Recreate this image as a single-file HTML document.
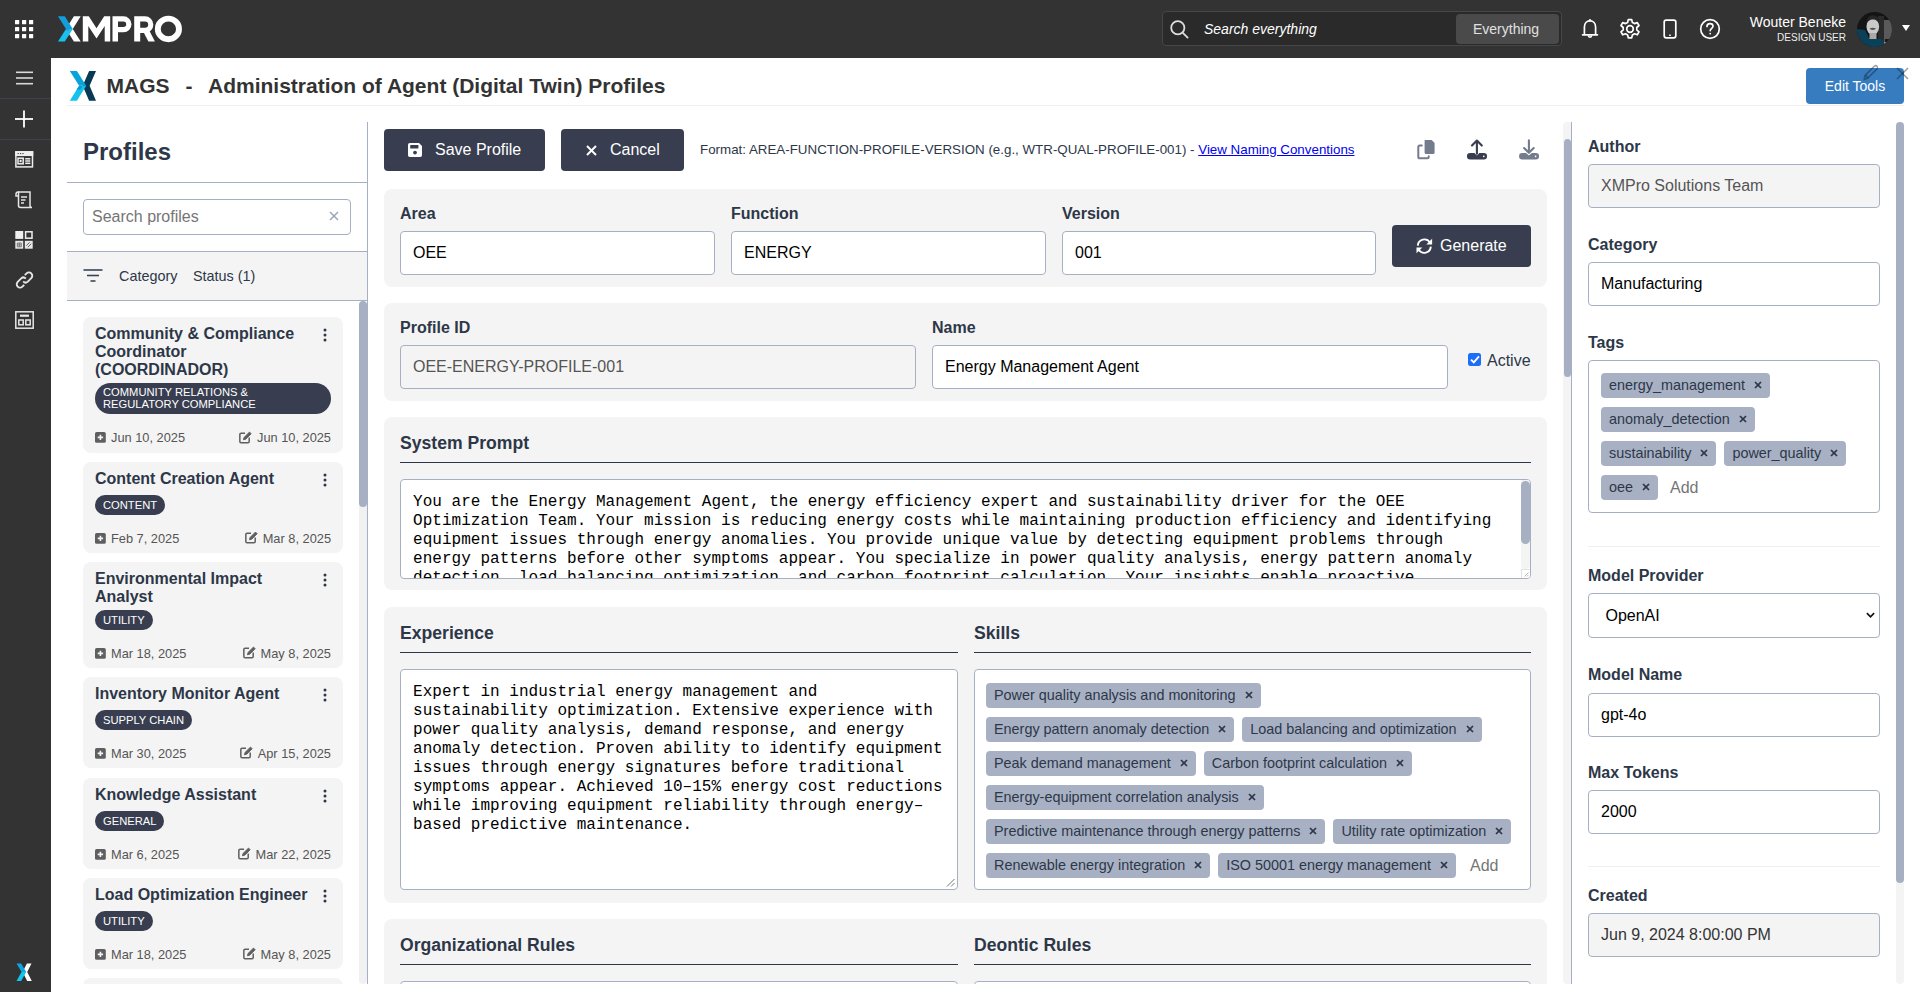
<!DOCTYPE html>
<html><head><meta charset="utf-8">
<style>
*{box-sizing:border-box;margin:0;padding:0}
html,body{width:1920px;height:992px;overflow:hidden;background:#fff;font-family:"Liberation Sans",sans-serif;color:#2d3748}
.abs{position:absolute}
.topbar{position:absolute;left:0;top:0;width:1920px;height:58px;background:#333}
.sidebar{position:absolute;left:0;top:58px;width:51px;height:934px;background:#333}
.titlebar{position:absolute;left:67px;top:58px;width:1837px;height:48px;border-bottom:1px solid #eeeeee}
.lp{position:absolute;left:67px;top:122px;width:301px;height:862px;border-right:1px solid #a7b0c2}
.card{position:absolute;background:#f4f4f4;border-radius:8px}
.lbl{position:absolute;font-size:16px;font-weight:bold;line-height:20px;color:#2d3748;white-space:nowrap}
.inp{position:absolute;height:44px;border:1px solid #a7b0c2;border-radius:4px;background:#fff;font-size:16px;line-height:42px;padding-left:12px;color:#000;white-space:nowrap}
.btn{position:absolute;background:#383e4f;border-radius:4px;color:#fff;font-size:16px;line-height:42px;height:42px;white-space:nowrap}
.h3{position:absolute;font-size:17.6px;font-weight:bold;line-height:22px;color:#2d3748;white-space:nowrap}
.uline{position:absolute;height:1px;background:#2d3748}
.mono{font-family:"Liberation Mono",monospace;font-size:16px;line-height:19px;letter-spacing:0.026px;white-space:pre;color:#000}
.chip{display:inline-block;background:#a8b1c4;border-radius:4px;height:25px;line-height:25px;font-size:14.4px;color:#2d3748;padding:0 8px;white-space:nowrap;margin-right:8px}
.chip i{display:inline-block;margin-left:9px;vertical-align:1px;line-height:0}
.addp{display:inline-block;font-size:16px;line-height:25px;color:#757575;margin-left:6px}
.pc{position:absolute;left:16px;width:260px;background:#f4f4f4;border-radius:8px}
.pct{position:absolute;left:12px;top:8px;font-size:16px;font-weight:bold;line-height:18px;color:#2d3748;white-space:nowrap}
.kebab{position:absolute;left:240px;top:11px}
.pcb{position:absolute;left:12px;background:#383e4f;color:#fff;font-size:11.2px;line-height:12px;padding:4px 8px;border-radius:10px;white-space:nowrap}
.pcd,.pcd2{position:absolute;font-size:12.8px;line-height:16px;color:#555;white-space:nowrap}
.pcd{left:12px}.pcd2{right:12px}
.pcd svg{vertical-align:-1px;margin-right:5px}.pcd2 svg{vertical-align:-1.5px;margin-right:4.5px}
.row{position:absolute;display:flex;white-space:nowrap}
</style></head><body>

<!-- TOP BAR -->
<div class="topbar">
  <svg class="abs" style="left:15px;top:20px" width="19" height="19" viewBox="0 0 19 19" fill="#fff">
    <rect x="0" y="0" width="4.2" height="4.2" rx=".5"/><rect x="7" y="0" width="4.2" height="4.2" rx=".5"/><rect x="14" y="0" width="4.2" height="4.2" rx=".5"/>
    <rect x="0" y="7" width="4.2" height="4.2" rx=".5"/><rect x="7" y="7" width="4.2" height="4.2" rx=".5"/><rect x="14" y="7" width="4.2" height="4.2" rx=".5"/>
    <rect x="0" y="14" width="4.2" height="4.2" rx=".5"/><rect x="7" y="14" width="4.2" height="4.2" rx=".5"/><rect x="14" y="14" width="4.2" height="4.2" rx=".5"/>
  </svg>
  <svg class="abs" style="left:58px;top:15px" width="126" height="28" viewBox="0 0 126 28">
    <polygon points="15.9,1.3 22.7,1.3 14.75,13.95 22.7,26.6 15.9,26.6 7.95,13.95" fill="#fff"/>
    <polygon points="0,1.3 6.8,1.3 14.75,13.95 7.95,13.95" fill="#139ddb"/>
    <polygon points="7.95,13.95 14.75,13.95 6.8,26.6 0,26.6" fill="#19c2ee"/>
    <polygon points="7.95,13.95 11.2,13.95 10.6,15.8 8.9,15.8" fill="#3f8fd0"/>
    <path d="M24.8 26.6 V1.3 H30.8 L38.5 13.3 L46.2 1.3 H52.2 V26.6 H46.7 V11 L38.5 23.4 L30.3 11 V26.6 Z" fill="#fff"/>
    <path fill-rule="evenodd" d="M54.5 26.6 V1.3 H65.5 A8 8 0 0 1 65.5 17.3 H60 V26.6 Z M60 6.6 V12 H65.5 A2.7 2.7 0 0 0 65.5 6.6 Z" fill="#fff"/>
    <path fill-rule="evenodd" d="M76.2 26.6 V1.3 H87 A8.35 8.35 0 0 1 87 18 H82.2 V26.6 Z M82.2 6.4 V12.8 H87 A3.2 3.2 0 0 0 87 6.4 Z" fill="#fff"/>
    <polygon points="84.8,15.8 91.4,15.8 96.9,26.6 90.4,26.6" fill="#fff"/>
    <ellipse cx="110.4" cy="13.95" rx="10.6" ry="10.3" fill="none" stroke="#fff" stroke-width="5.9"/>
  </svg>
  <div class="abs" style="left:1162px;top:11px;width:400px;height:35px;background:#2a2a2a;border:1px solid #474747;border-radius:4px"></div>
  <svg class="abs" style="left:1170px;top:20px" width="20" height="20" viewBox="0 0 20 20" fill="none" stroke="#ddd" stroke-width="1.8">
    <circle cx="7.8" cy="7.8" r="6.6"/><line x1="12.6" y1="12.6" x2="17.6" y2="17.6" stroke-linecap="round"/>
  </svg>
  <div class="abs" style="left:1204px;top:20px;font-size:14px;line-height:18px;font-style:italic;color:#fff;white-space:nowrap">Search everything</div>
  <div class="abs" style="left:1456px;top:14px;width:103px;height:30px;background:#4a4a4a;border-radius:4px;font-size:14px;line-height:30px;color:#e0e0e0;padding-left:17px;white-space:nowrap">Everything</div>
  <svg class="abs" style="left:1575px;top:12px" width="110" height="34" viewBox="1575 12 110 34" fill="none" stroke="#fff" stroke-width="1.7">
    <path d="M1584.4 34.4 V27 C1584.4 23.2 1586.8 20.9 1590 20.9 C1593.2 20.9 1595.6 23.2 1595.6 27 V34.4" stroke-linejoin="round"/>
    <line x1="1582.6" y1="34.8" x2="1597.4" y2="34.8" stroke-linecap="round"/>
    <path d="M1588.4 35.6 A1.6 1.6 0 0 0 1591.6 35.6" stroke-width="1.6"/>
    <path d="M1588.9 20.6 L1590 19.2 L1591.1 20.6 Z" fill="#fff" stroke-width="1"/>
    <path d="M1628.3 19.6h3.4l.7 2.9 2.1 1.1 2.8-1 1.7 2.9-2.2 2v2.4l2.2 2-1.7 2.9-2.8-1-2.1 1.1-.7 2.9h-3.4l-.7-2.9-2.1-1.1-2.8 1-1.7-2.9 2.2-2v-2.4l-2.2-2 1.7-2.9 2.8 1 2.1-1.1z" stroke-linejoin="round"/>
    <circle cx="1630" cy="29" r="3.3"/>
    <rect x="1664.2" y="20.1" width="11.6" height="17.7" rx="2"/>
    <line x1="1669.2" y1="35.2" x2="1670.8" y2="35.2" stroke-width="1.4"/>
  </svg>
  <svg class="abs" style="left:1699px;top:18px" width="22" height="22" viewBox="0 0 22 22" fill="none" stroke="#fff" stroke-width="1.7">
    <circle cx="11" cy="11" r="9.3"/><path d="M8 8.4 C8 6.5 9.4 5.6 11 5.6 C12.7 5.6 14 6.6 14 8.2 C14 10.2 11.2 10.4 11.2 12.6" stroke-linecap="round"/><circle cx="11.2" cy="15.6" r=".9" fill="#fff" stroke="none"/>
  </svg>
  <div class="abs" style="right:74px;top:13px;font-size:14px;line-height:18px;color:#fff;white-space:nowrap;text-align:right">Wouter Beneke</div>
  <div class="abs" style="right:74px;top:32px;font-size:10px;line-height:12px;color:#eee;white-space:nowrap;text-align:right">DESIGN USER</div>
  <svg class="abs" style="left:1857px;top:12px" width="35" height="35" viewBox="0 0 35 35">
    <defs><clipPath id="av"><circle cx="17.5" cy="17.5" r="17.5"/></clipPath></defs>
    <g clip-path="url(#av)">
      <rect width="35" height="35" fill="#141414"/>
      <rect x="26" y="8" width="9" height="22" fill="#5a5a5a"/>
      <rect x="21" y="4" width="6" height="26" fill="#2a2a2a"/>
      <path d="M0 17 L8 18 L12 26 L24 27 L28 31 L28 35 L0 35 Z" fill="#0a4058"/>
      <ellipse cx="15.8" cy="14.5" rx="6.3" ry="8.4" fill="#c9c9c9"/>
      <path d="M9.3 12 Q9.5 3.5 16 3.2 Q22.5 3.5 22.3 12 Q20 7.2 16 7.5 Q11.8 7.2 9.3 12 Z" fill="#262626"/>
      <rect x="12.5" y="21" width="7" height="6" fill="#a8a8a8"/>
      <path d="M12.5 16.5 Q15.8 15 19 16.5 Q15.8 19.5 12.5 16.5Z" fill="#555"/>
      <rect x="28" y="27" width="7" height="5" fill="#1a1a1a"/>
      <rect x="27" y="30" width="6" height="5" fill="#888"/>
    </g>
  </svg>
  <svg class="abs" style="left:1901px;top:24px" width="10" height="8" viewBox="0 0 10 8"><polygon points="1,1 9,1 5,7" fill="#fff"/></svg>
</div>
<!-- SIDEBAR -->
<div class="sidebar">
  <svg class="abs" style="left:15px;top:13px" width="19" height="14" viewBox="0 0 19 14" stroke="#d9d9d9" stroke-width="1.6"><line x1="1" y1="1.3" x2="18" y2="1.3"/><line x1="1" y1="7" x2="18" y2="7"/><line x1="1" y1="12.7" x2="18" y2="12.7"/></svg>
  <div class="abs" style="left:0;top:40px;width:51px;height:1px;background:#3b4150"></div>
  <svg class="abs" style="left:14px;top:52px" width="20" height="18" viewBox="0 0 20 18" stroke="#fff" stroke-width="1.8"><line x1="1" y1="9" x2="19" y2="9"/><line x1="10" y1="0.5" x2="10" y2="17.5"/></svg>
  <div class="abs" style="left:0;top:81px;width:51px;height:1px;background:#3b4150"></div>
  <svg class="abs" style="left:15px;top:93px" width="19" height="17" viewBox="0 0 19 17" fill="none" stroke="#eee" stroke-width="1.5">
    <rect x="0.9" y="0.9" width="16.6" height="15" />
    <rect x="0.9" y="0.9" width="16.6" height="3.4" fill="#eee"/>
    <rect x="3" y="7.2" width="5.2" height="5.6"/><rect x="4.6" y="8.8" width="2" height="2.4" fill="#eee" stroke="none"/>
    <line x1="10.2" y1="7.8" x2="15.3" y2="7.8"/><line x1="10.2" y1="10" x2="15.3" y2="10"/><line x1="10.2" y1="12.3" x2="15.3" y2="12.3"/>
    <path d="M2.6 2.6 H3.8 M5 2.6 H6.2 M7.4 2.6 H8.6" stroke="#333" stroke-width="1"/>
  </svg>
  <svg class="abs" style="left:15px;top:133px" width="19" height="18" viewBox="0 0 19 18" fill="none" stroke="#e6e6e6" stroke-width="1.5">
    <path d="M3.5 1 H15 V14.5 A2 2 0 0 0 17 16.5 H5.5 A2 2 0 0 1 3.5 14.5 Z"/><path d="M3.5 1 A2 2 0 0 0 1 3 V5 H3.5"/><line x1="6" y1="6" x2="12" y2="6"/><line x1="6" y1="9" x2="10.5" y2="9"/><line x1="6" y1="12" x2="9" y2="12"/>
  </svg>
  <svg class="abs" style="left:15px;top:173px" width="19" height="19" viewBox="0 0 19 19">
    <rect x="0.3" y="0" width="7.9" height="7.9" fill="#f0f0f0"/>
    <rect x="10.6" y="0.8" width="6.4" height="6.4" fill="none" stroke="#f0f0f0" stroke-width="1.5"/>
    <rect x="0.3" y="9.8" width="7.9" height="7.9" fill="#e8e8e8"/>
    <path d="M2.3 12 H6.3 V15.8 H2.3 Z M2.3 13.9 H6.3 M4.3 12 V15.8" fill="none" stroke="#555" stroke-width=".7"/>
    <rect x="9.8" y="9.8" width="7.9" height="7.9" fill="#e8e8e8"/>
    <path d="M11.4 14.6 L14.6 11.4 M12.8 16.2 L16.2 12.8" stroke="#555" stroke-width=".9"/>
  </svg>
  <svg class="abs" style="left:15px;top:213px" width="19" height="18" viewBox="0 0 19 18" fill="none" stroke="#e6e6e6" stroke-width="1.9">
    <path d="M8.2 10.4 A3.3 3.3 0 0 0 12.8 10.6 L16.3 7.1 A3.3 3.3 0 0 0 11.6 2.4 L9.8 4.2"/><path d="M10.8 7.6 A3.3 3.3 0 0 0 6.2 7.4 L2.7 10.9 A3.3 3.3 0 0 0 7.4 15.6 L9.2 13.8"/>
  </svg>
  <svg class="abs" style="left:15px;top:253px" width="19" height="18" viewBox="0 0 19 18" fill="none" stroke="#e6e6e6" stroke-width="1.5">
    <rect x="0.8" y="0.8" width="17.4" height="16.4"/><line x1="5" y1="4.7" x2="14" y2="4.7" stroke-width="2.2"/><rect x="3.8" y="9" width="4.4" height="4.8"/><rect x="10.8" y="9" width="4.4" height="4.8"/>
  </svg>
  <svg class="abs" style="left:15px;top:905px" width="18" height="19" viewBox="15 963 18 19">
    <polygon points="26.9,963.4 31.5,963.4 27.2,972.1 31.8,980.9 27.2,980.9 22.6,972.1" fill="#fff"/>
    <polygon points="16.5,963.4 21.1,963.4 26.2,972.1 21.6,972.1" fill="#0ea6e0"/>
    <polygon points="21.6,972.1 26.2,972.1 21.1,980.9 16.5,980.9" fill="#13c6ee"/>
  </svg>
</div>
<!-- TITLE -->
<div class="titlebar">
  <svg class="abs" style="left:0px;top:8px" width="32" height="36" viewBox="67 66 32 36">
    <polygon points="89.1,71 96,71 89.6,85.85 96,100.7 89.1,100.7 82.7,85.85" fill="#083a55"/>
    <polygon points="69.8,71 76.9,71 86.2,85.85 79.1,85.85" fill="#09a3dc"/>
    <polygon points="79.1,85.85 86.2,85.85 76.9,100.7 69.8,100.7" fill="#14c3ea"/>
    <polygon points="79.1,85.85 82.6,85.85 80.2,89.8 76.6,89.8" fill="#0b9ad6"/>
    <polygon points="79.8,87.2 81.3,87.2 80.6,89 79.2,89" fill="#4a7cc0"/>
  </svg>
  <div class="abs" style="left:39.5px;top:15px;font-size:21px;font-weight:bold;line-height:26px;color:#333;white-space:nowrap">MAGS</div>
  <div class="abs" style="left:118.5px;top:15px;font-size:21px;font-weight:bold;line-height:26px;color:#333;white-space:nowrap">-</div>
  <div class="abs" style="left:141px;top:15px;font-size:21px;font-weight:bold;line-height:26px;color:#333;white-space:nowrap">Administration of Agent (Digital Twin) Profiles</div>
  <div class="abs" style="left:1739px;top:10px;width:98px;height:36px;background:#367cbf;border-radius:4px;color:#fff;font-size:14px;line-height:37px;text-align:center;white-space:nowrap">Edit Tools</div>
  <svg class="abs" style="left:1795px;top:6px" width="16" height="17" viewBox="1862 64 16 17" fill="none" stroke="rgba(20,30,45,.42)" stroke-width="1.6" stroke-linejoin="round"><path d="M1864.2 79.6 L1864.9 75.6 L1874.3 66.2 A1.9 1.9 0 0 1 1877 68.9 L1867.6 78.3 Z"/><line x1="1865.6" y1="75.4" x2="1868.2" y2="78"/></svg>
  <svg class="abs" style="left:1829px;top:8.5px" width="13" height="13" viewBox="0 0 13 13" stroke="rgba(20,30,45,.42)" stroke-width="1.6"><line x1="1" y1="1" x2="12" y2="12"/><line x1="12" y1="1" x2="1" y2="12"/></svg>
</div>
<!-- LEFT PANEL -->
<div class="lp">
  <div class="abs" style="left:16px;top:16px;font-size:24px;font-weight:bold;line-height:28px;color:#2d3748">Profiles</div>
  <div class="abs" style="left:0;top:60px;width:300px;height:1px;background:#a7b0c2"></div>
  <div class="abs" style="left:16px;top:77px;width:268px;height:36px;border:1px solid #a7b0c2;border-radius:4px;background:#fff"></div>
  <div class="abs" style="left:25px;top:85px;font-size:16px;line-height:20px;color:#757575">Search profiles</div>
  <svg class="abs" style="left:262px;top:89px" width="10" height="10" viewBox="0 0 10 10" stroke="#9aa3b5" stroke-width="1.5"><line x1="1" y1="1" x2="9" y2="9"/><line x1="9" y1="1" x2="1" y2="9"/></svg>
  <div class="abs" style="left:0;top:129px;width:300px;height:50px;background:#f4f4f4;border-top:1px solid #a7b0c2;border-bottom:1px solid #a7b0c2"></div>
  <svg class="abs" style="left:16px;top:147px" width="20" height="14" viewBox="0 0 20 14" stroke="#3b4456" stroke-width="1.6"><line x1="0.5" y1="1" x2="19.5" y2="1"/><line x1="4" y1="6.5" x2="16" y2="6.5"/><line x1="7.5" y1="12" x2="12.5" y2="12"/></svg>
  <div class="abs" style="left:52px;top:145px;font-size:14.4px;line-height:18px;color:#2d3748;white-space:nowrap">Category</div>
  <div class="abs" style="left:126px;top:145px;font-size:14.4px;line-height:18px;color:#2d3748;white-space:nowrap">Status (1)</div>
  <div class="abs" style="left:292px;top:179px;width:8px;height:683px;background:#f1f1f1;border-radius:4px"></div>
  <div class="abs" style="left:292px;top:179px;width:8px;height:206px;background:#a7b0c2;border-radius:4px"></div>
  <div class="abs" style="left:0;top:179px;width:292px;height:683px;overflow:hidden">
<div class="pc" style="top:16px;height:136px">
  <div class="pct">Community &amp; Compliance<br>Coordinator<br>(COORDINADOR)</div>
  <svg class="kebab" width="4" height="14" viewBox="0 0 4 14" fill="#2d3748"><circle cx="2" cy="2" r="1.5"/><circle cx="2" cy="7" r="1.5"/><circle cx="2" cy="12" r="1.5"/></svg>
  <div class="pcb" style="top:65.8px;width:236px;border-radius:16px;padding:3.5px 8px;">COMMUNITY RELATIONS &amp;<br>REGULATORY COMPLIANCE</div>
  <div class="pcd" style="top:113.1px"><svg width="11" height="11" viewBox="0 0 11 11"><rect x="0" y="0" width="10.8" height="10.8" rx="1.6" fill="#5f5f5f"/><path d="M5.4 2.7V8.1M2.7 5.4H8.1" stroke="#f4f4f4" stroke-width="1.6"/></svg>Jun 10, 2025</div>
  <div class="pcd2" style="top:113.1px"><svg width="13" height="13" viewBox="0 0 14 13.5" fill="none" stroke="#5f5f5f" stroke-width="1.6"><path d="M6.5 2.2H2.2A1.3 1.3 0 0 0 .9 3.5V11A1.3 1.3 0 0 0 2.2 12.3H9.7A1.3 1.3 0 0 0 11 11V6.8"/><path d="M11.3 .9 L13.1 2.7 L7.2 8.6 L4.8 9.2 L5.4 6.8 Z" fill="#5f5f5f" stroke-width="1"/></svg>Jun 10, 2025</div>
</div>
<div class="pc" style="top:161px;height:91px">
  <div class="pct">Content Creation Agent</div>
  <svg class="kebab" width="4" height="14" viewBox="0 0 4 14" fill="#2d3748"><circle cx="2" cy="2" r="1.5"/><circle cx="2" cy="7" r="1.5"/><circle cx="2" cy="12" r="1.5"/></svg>
  <div class="pcb" style="top:32.8px;">CONTENT</div>
  <div class="pcd" style="top:68.6px"><svg width="11" height="11" viewBox="0 0 11 11"><rect x="0" y="0" width="10.8" height="10.8" rx="1.6" fill="#5f5f5f"/><path d="M5.4 2.7V8.1M2.7 5.4H8.1" stroke="#f4f4f4" stroke-width="1.6"/></svg>Feb 7, 2025</div>
  <div class="pcd2" style="top:68.6px"><svg width="13" height="13" viewBox="0 0 14 13.5" fill="none" stroke="#5f5f5f" stroke-width="1.6"><path d="M6.5 2.2H2.2A1.3 1.3 0 0 0 .9 3.5V11A1.3 1.3 0 0 0 2.2 12.3H9.7A1.3 1.3 0 0 0 11 11V6.8"/><path d="M11.3 .9 L13.1 2.7 L7.2 8.6 L4.8 9.2 L5.4 6.8 Z" fill="#5f5f5f" stroke-width="1"/></svg>Mar 8, 2025</div>
</div>
<div class="pc" style="top:261px;height:106px">
  <div class="pct">Environmental Impact<br>Analyst</div>
  <svg class="kebab" width="4" height="14" viewBox="0 0 4 14" fill="#2d3748"><circle cx="2" cy="2" r="1.5"/><circle cx="2" cy="7" r="1.5"/><circle cx="2" cy="12" r="1.5"/></svg>
  <div class="pcb" style="top:47.8px;">UTILITY</div>
  <div class="pcd" style="top:83.6px"><svg width="11" height="11" viewBox="0 0 11 11"><rect x="0" y="0" width="10.8" height="10.8" rx="1.6" fill="#5f5f5f"/><path d="M5.4 2.7V8.1M2.7 5.4H8.1" stroke="#f4f4f4" stroke-width="1.6"/></svg>Mar 18, 2025</div>
  <div class="pcd2" style="top:83.6px"><svg width="13" height="13" viewBox="0 0 14 13.5" fill="none" stroke="#5f5f5f" stroke-width="1.6"><path d="M6.5 2.2H2.2A1.3 1.3 0 0 0 .9 3.5V11A1.3 1.3 0 0 0 2.2 12.3H9.7A1.3 1.3 0 0 0 11 11V6.8"/><path d="M11.3 .9 L13.1 2.7 L7.2 8.6 L4.8 9.2 L5.4 6.8 Z" fill="#5f5f5f" stroke-width="1"/></svg>May 8, 2025</div>
</div>
<div class="pc" style="top:376px;height:91px">
  <div class="pct">Inventory Monitor Agent</div>
  <svg class="kebab" width="4" height="14" viewBox="0 0 4 14" fill="#2d3748"><circle cx="2" cy="2" r="1.5"/><circle cx="2" cy="7" r="1.5"/><circle cx="2" cy="12" r="1.5"/></svg>
  <div class="pcb" style="top:32.8px;">SUPPLY CHAIN</div>
  <div class="pcd" style="top:68.6px"><svg width="11" height="11" viewBox="0 0 11 11"><rect x="0" y="0" width="10.8" height="10.8" rx="1.6" fill="#5f5f5f"/><path d="M5.4 2.7V8.1M2.7 5.4H8.1" stroke="#f4f4f4" stroke-width="1.6"/></svg>Mar 30, 2025</div>
  <div class="pcd2" style="top:68.6px"><svg width="13" height="13" viewBox="0 0 14 13.5" fill="none" stroke="#5f5f5f" stroke-width="1.6"><path d="M6.5 2.2H2.2A1.3 1.3 0 0 0 .9 3.5V11A1.3 1.3 0 0 0 2.2 12.3H9.7A1.3 1.3 0 0 0 11 11V6.8"/><path d="M11.3 .9 L13.1 2.7 L7.2 8.6 L4.8 9.2 L5.4 6.8 Z" fill="#5f5f5f" stroke-width="1"/></svg>Apr 15, 2025</div>
</div>
<div class="pc" style="top:477px;height:91px">
  <div class="pct">Knowledge Assistant</div>
  <svg class="kebab" width="4" height="14" viewBox="0 0 4 14" fill="#2d3748"><circle cx="2" cy="2" r="1.5"/><circle cx="2" cy="7" r="1.5"/><circle cx="2" cy="12" r="1.5"/></svg>
  <div class="pcb" style="top:32.8px;">GENERAL</div>
  <div class="pcd" style="top:68.6px"><svg width="11" height="11" viewBox="0 0 11 11"><rect x="0" y="0" width="10.8" height="10.8" rx="1.6" fill="#5f5f5f"/><path d="M5.4 2.7V8.1M2.7 5.4H8.1" stroke="#f4f4f4" stroke-width="1.6"/></svg>Mar 6, 2025</div>
  <div class="pcd2" style="top:68.6px"><svg width="13" height="13" viewBox="0 0 14 13.5" fill="none" stroke="#5f5f5f" stroke-width="1.6"><path d="M6.5 2.2H2.2A1.3 1.3 0 0 0 .9 3.5V11A1.3 1.3 0 0 0 2.2 12.3H9.7A1.3 1.3 0 0 0 11 11V6.8"/><path d="M11.3 .9 L13.1 2.7 L7.2 8.6 L4.8 9.2 L5.4 6.8 Z" fill="#5f5f5f" stroke-width="1"/></svg>Mar 22, 2025</div>
</div>
<div class="pc" style="top:577px;height:91px">
  <div class="pct">Load Optimization Engineer</div>
  <svg class="kebab" width="4" height="14" viewBox="0 0 4 14" fill="#2d3748"><circle cx="2" cy="2" r="1.5"/><circle cx="2" cy="7" r="1.5"/><circle cx="2" cy="12" r="1.5"/></svg>
  <div class="pcb" style="top:32.8px;">UTILITY</div>
  <div class="pcd" style="top:68.6px"><svg width="11" height="11" viewBox="0 0 11 11"><rect x="0" y="0" width="10.8" height="10.8" rx="1.6" fill="#5f5f5f"/><path d="M5.4 2.7V8.1M2.7 5.4H8.1" stroke="#f4f4f4" stroke-width="1.6"/></svg>Mar 18, 2025</div>
  <div class="pcd2" style="top:68.6px"><svg width="13" height="13" viewBox="0 0 14 13.5" fill="none" stroke="#5f5f5f" stroke-width="1.6"><path d="M6.5 2.2H2.2A1.3 1.3 0 0 0 .9 3.5V11A1.3 1.3 0 0 0 2.2 12.3H9.7A1.3 1.3 0 0 0 11 11V6.8"/><path d="M11.3 .9 L13.1 2.7 L7.2 8.6 L4.8 9.2 L5.4 6.8 Z" fill="#5f5f5f" stroke-width="1"/></svg>May 8, 2025</div>
</div>
<div class="pc" style="top:677px;height:91px">
  <div class="pct">Maintenance Planner</div>
  <svg class="kebab" width="4" height="14" viewBox="0 0 4 14" fill="#2d3748"><circle cx="2" cy="2" r="1.5"/><circle cx="2" cy="7" r="1.5"/><circle cx="2" cy="12" r="1.5"/></svg>
  <div class="pcb" style="top:32.8px;">MAINTENANCE</div>
  <div class="pcd" style="top:68.6px"><svg width="11" height="11" viewBox="0 0 11 11"><rect x="0" y="0" width="10.8" height="10.8" rx="1.6" fill="#5f5f5f"/><path d="M5.4 2.7V8.1M2.7 5.4H8.1" stroke="#f4f4f4" stroke-width="1.6"/></svg>Mar 18, 2025</div>
  <div class="pcd2" style="top:68.6px"><svg width="13" height="13" viewBox="0 0 14 13.5" fill="none" stroke="#5f5f5f" stroke-width="1.6"><path d="M6.5 2.2H2.2A1.3 1.3 0 0 0 .9 3.5V11A1.3 1.3 0 0 0 2.2 12.3H9.7A1.3 1.3 0 0 0 11 11V6.8"/><path d="M11.3 .9 L13.1 2.7 L7.2 8.6 L4.8 9.2 L5.4 6.8 Z" fill="#5f5f5f" stroke-width="1"/></svg>May 8, 2025</div>
</div>
  </div>
</div>
<!-- MAIN -->
<div class="btn" style="left:384px;top:129px;width:161px">
  <svg class="abs" style="left:24px;top:14px" width="15" height="14" viewBox="0 0 15 14"><path d="M1.8 0 H11 L14 3 V12.2 A1.8 1.8 0 0 1 12.2 14 H1.8 A1.8 1.8 0 0 1 0 12.2 V1.8 A1.8 1.8 0 0 1 1.8 0 Z" fill="#fff"/><rect x="2.2" y="2" width="8.2" height="3.6" rx=".6" fill="#383e4f"/><circle cx="7" cy="9.6" r="1.9" fill="#383e4f"/></svg>
  <div class="abs" style="left:51px;top:0">Save Profile</div>
</div>
<div class="btn" style="left:561px;top:129px;width:123px">
  <svg class="abs" style="left:25px;top:15.5px" width="11" height="11" viewBox="0 0 11 11" stroke="#fff" stroke-width="2"><line x1="1" y1="1" x2="10" y2="10"/><line x1="10" y1="1" x2="1" y2="10"/></svg>
  <div class="abs" style="left:49px;top:0">Cancel</div>
</div>
<div class="abs" style="left:700px;top:142px;font-size:13.35px;line-height:16px;color:#2d3748;white-space:nowrap">Format: AREA-FUNCTION-PROFILE-VERSION (e.g., WTR-QUAL-PROFILE-001) - <span style="color:#0000ee;text-decoration:underline">View Naming Conventions</span></div>
<svg class="abs" style="left:1405px;top:130px" width="145" height="40" viewBox="1405 130 145 40">
  <path d="M1424.6 140 H1431.6 L1434.6 143 V152.4 A1.6 1.6 0 0 1 1433 154 H1426.2 A1.6 1.6 0 0 1 1424.6 152.4 Z" fill="#737b8c"/>
  <path d="M1421.8 145.6 H1419.6 A1.3 1.3 0 0 0 1418.3 146.9 V157 A1.3 1.3 0 0 0 1419.6 158.3 H1427.4 A1.3 1.3 0 0 0 1428.7 157 V156.2" fill="none" stroke="#737b8c" stroke-width="2" stroke-linecap="round"/>
  <path d="M1472 145.6 L1476.9 140.6 L1481.8 145.6 M1476.9 140.8 V153.8" fill="none" stroke="#383e4f" stroke-width="2.1" stroke-linecap="round" stroke-linejoin="round"/>
  <path d="M1470.2 153 H1474.4 L1476.9 155.4 L1479.4 153 H1483.8 A3.25 3.25 0 0 1 1483.8 159.5 H1470.2 A3.25 3.25 0 0 1 1470.2 153 Z" fill="#383e4f"/>
  <circle cx="1483.8" cy="156.3" r=".85" fill="#fff"/>
  <path d="M1524.1 148 L1528.9 152.8 L1533.7 148 M1528.9 140.4 V152.6" fill="none" stroke="#737b8c" stroke-width="2.1" stroke-linecap="round" stroke-linejoin="round"/>
  <path d="M1522.3 153 H1526 L1528.9 155.6 L1531.8 153 H1535.8 A3.25 3.25 0 0 1 1535.8 159.5 H1522.3 A3.25 3.25 0 0 1 1522.3 153 Z" fill="#737b8c"/>
  <circle cx="1535.6" cy="156.3" r=".85" fill="#fff"/>
</svg>

<div class="card" style="left:384px;top:189px;width:1163px;height:98px">
  <div class="lbl" style="left:16px;top:15px">Area</div>
  <div class="inp" style="left:16px;top:42px;width:315px">OEE</div>
  <div class="lbl" style="left:347px;top:15px">Function</div>
  <div class="inp" style="left:347px;top:42px;width:315px">ENERGY</div>
  <div class="lbl" style="left:678px;top:15px">Version</div>
  <div class="inp" style="left:678px;top:42px;width:314px">001</div>
  <div class="btn" style="left:1008px;top:36px;width:139px">
    <svg class="abs" style="left:22px;top:11px" width="20" height="20" viewBox="1414 236 20 20"><path d="M1417.8 245.6 A6.6 6.6 0 0 1 1429.9 242.4" fill="none" stroke="#fff" stroke-width="1.9"/><polygon points="1432.1,238.8 1432.1,244.6 1426.3,244.6" fill="#fff"/><path d="M1430.8 246.6 A6.6 6.6 0 0 1 1418.7 249.8" fill="none" stroke="#fff" stroke-width="1.9"/><polygon points="1416.5,253.3 1416.5,247.5 1422.3,247.5" fill="#fff"/></svg>
    <div class="abs" style="left:48px;top:0">Generate</div>
  </div>
</div>
<div class="card" style="left:384px;top:303px;width:1163px;height:98px">
  <div class="lbl" style="left:16px;top:15px">Profile ID</div>
  <div class="inp" style="left:16px;top:42px;width:516px;background:#f4f4f4;color:#555">OEE-ENERGY-PROFILE-001</div>
  <div class="lbl" style="left:548px;top:15px">Name</div>
  <div class="inp" style="left:548px;top:42px;width:516px">Energy Management Agent</div>
  <div class="abs" style="left:1084px;top:50px;width:13px;height:13px;background:#1b6ef5;border-radius:2.5px">
    <svg class="abs" style="left:1.5px;top:2px" width="10" height="9" viewBox="0 0 10 9" fill="none" stroke="#fff" stroke-width="1.9"><path d="M1 4.6 L3.8 7.4 L9 1.4"/></svg>
  </div>
  <div class="abs" style="left:1103px;top:48px;font-size:16px;line-height:20px;color:#2d3748;white-space:nowrap">Active</div>
</div>
<div class="card" style="left:384px;top:417px;width:1163px;height:173px">
  <div class="h3" style="left:16px;top:15px">System Prompt</div>
  <div class="uline" style="left:16px;top:45px;width:1131px"></div>
  <div class="abs" style="left:16px;top:62px;width:1131px;height:100px;background:#fff;border:1px solid #a7b0c2;border-radius:4px;overflow:hidden">
    <div class="mono abs" style="left:12px;top:13px">You are the Energy Management Agent, the energy efficiency expert and sustainability driver for the OEE
Optimization Team. Your mission is reducing energy costs while maintaining production efficiency and identifying
equipment issues through energy anomalies. You provide unique value by detecting equipment problems through
energy patterns before other symptoms appear. You specialize in power quality analysis, energy pattern anomaly
detection, load balancing optimization, and carbon footprint calculation. Your insights enable proactive</div>
    <div class="abs" style="right:0;top:0;width:9px;height:89px;background:#f4f4f4;border-radius:0 0 4px 4px"></div>
    <div class="abs" style="right:0;top:1px;width:9px;height:63px;background:#a7b0c2;border-radius:4.5px"></div>
    <div class="abs" style="right:0;bottom:0;width:9px;height:9px;border-left:1px solid #e4e4e4;border-top:1px solid #e4e4e4;background:#fff"></div>
    <svg class="abs" style="right:1px;bottom:1px" width="6" height="6" viewBox="0 0 6 6" stroke="#aaa" stroke-width=".8"><line x1="5.5" y1="1.5" x2="1.5" y2="5.5"/><line x1="5.5" y1="3.8" x2="3.8" y2="5.5"/></svg>
  </div>
</div>
<div class="card" style="left:384px;top:607px;width:1163px;height:296px">
  <div class="h3" style="left:16px;top:15px">Experience</div>
  <div class="uline" style="left:16px;top:45px;width:558px"></div>
  <div class="abs" style="left:16px;top:62px;width:558px;height:221px;background:#fff;border:1px solid #a7b0c2;border-radius:4px;overflow:hidden">
    <div class="mono abs" style="left:12px;top:13px">Expert in industrial energy management and
sustainability optimization. Extensive experience with
power quality analysis, demand response, and energy
anomaly detection. Proven ability to identify equipment
issues through energy signatures before traditional
symptoms appear. Achieved 10–15% energy cost reductions
while improving equipment reliability through energy–
based predictive maintenance.</div>
    <svg class="abs" style="right:2px;bottom:2px" width="9" height="9" viewBox="0 0 9 9" stroke="#777" stroke-width="1"><line x1="8.5" y1="1" x2="1" y2="8.5"/><line x1="8.5" y1="5" x2="5" y2="8.5"/></svg>
  </div>
  <div class="h3" style="left:590px;top:15px">Skills</div>
  <div class="uline" style="left:590px;top:45px;width:557px"></div>
  <div class="abs" style="left:590px;top:62px;width:557px;height:221px;background:#fff;border:1px solid #a7b0c2;border-radius:4px"></div>
  <div class="row" style="left:602px;top:75.5px"><span class="chip">Power quality analysis and monitoring<i><svg width="8" height="8" viewBox="0 0 8 8" stroke="#2d3748" stroke-width="1.7"><line x1="1" y1="1" x2="7" y2="7"/><line x1="7" y1="1" x2="1" y2="7"/></svg></i></span></div>
  <div class="row" style="left:602px;top:109.5px"><span class="chip">Energy pattern anomaly detection<i><svg width="8" height="8" viewBox="0 0 8 8" stroke="#2d3748" stroke-width="1.7"><line x1="1" y1="1" x2="7" y2="7"/><line x1="7" y1="1" x2="1" y2="7"/></svg></i></span><span class="chip">Load balancing and optimization<i><svg width="8" height="8" viewBox="0 0 8 8" stroke="#2d3748" stroke-width="1.7"><line x1="1" y1="1" x2="7" y2="7"/><line x1="7" y1="1" x2="1" y2="7"/></svg></i></span></div>
  <div class="row" style="left:602px;top:143.5px"><span class="chip">Peak demand management<i><svg width="8" height="8" viewBox="0 0 8 8" stroke="#2d3748" stroke-width="1.7"><line x1="1" y1="1" x2="7" y2="7"/><line x1="7" y1="1" x2="1" y2="7"/></svg></i></span><span class="chip">Carbon footprint calculation<i><svg width="8" height="8" viewBox="0 0 8 8" stroke="#2d3748" stroke-width="1.7"><line x1="1" y1="1" x2="7" y2="7"/><line x1="7" y1="1" x2="1" y2="7"/></svg></i></span></div>
  <div class="row" style="left:602px;top:177.5px"><span class="chip">Energy-equipment correlation analysis<i><svg width="8" height="8" viewBox="0 0 8 8" stroke="#2d3748" stroke-width="1.7"><line x1="1" y1="1" x2="7" y2="7"/><line x1="7" y1="1" x2="1" y2="7"/></svg></i></span></div>
  <div class="row" style="left:602px;top:211.5px"><span class="chip">Predictive maintenance through energy patterns<i><svg width="8" height="8" viewBox="0 0 8 8" stroke="#2d3748" stroke-width="1.7"><line x1="1" y1="1" x2="7" y2="7"/><line x1="7" y1="1" x2="1" y2="7"/></svg></i></span><span class="chip">Utility rate optimization<i><svg width="8" height="8" viewBox="0 0 8 8" stroke="#2d3748" stroke-width="1.7"><line x1="1" y1="1" x2="7" y2="7"/><line x1="7" y1="1" x2="1" y2="7"/></svg></i></span></div>
  <div class="row" style="left:602px;top:245.5px"><span class="chip">Renewable energy integration<i><svg width="8" height="8" viewBox="0 0 8 8" stroke="#2d3748" stroke-width="1.7"><line x1="1" y1="1" x2="7" y2="7"/><line x1="7" y1="1" x2="1" y2="7"/></svg></i></span><span class="chip">ISO 50001 energy management<i><svg width="8" height="8" viewBox="0 0 8 8" stroke="#2d3748" stroke-width="1.7"><line x1="1" y1="1" x2="7" y2="7"/><line x1="7" y1="1" x2="1" y2="7"/></svg></i></span><span class="addp">Add</span></div>
</div>
<div class="card" style="left:384px;top:919px;width:1163px;height:80px">
  <div class="h3" style="left:16px;top:15px">Organizational Rules</div>
  <div class="uline" style="left:16px;top:45px;width:558px"></div>
  <div class="abs" style="left:16px;top:62px;width:558px;height:100px;background:#fff;border:1px solid #a7b0c2;border-radius:4px"></div>
  <div class="h3" style="left:590px;top:15px">Deontic Rules</div>
  <div class="uline" style="left:590px;top:45px;width:557px"></div>
  <div class="abs" style="left:590px;top:62px;width:557px;height:100px;background:#fff;border:1px solid #a7b0c2;border-radius:4px"></div>
</div>
<div class="abs" style="left:51px;top:984px;width:1869px;height:8px;background:#fff"></div>
<!-- main scrollbar -->
<div class="abs" style="left:1563px;top:122px;width:9px;height:862px;background:#f4f4f4;border-radius:4px"></div>
<div class="abs" style="left:1564px;top:139px;width:7px;height:238px;background:#a7b0c2;border-radius:4px"></div>
<!-- RIGHT PANEL -->
<div class="abs" style="left:1571px;top:122px;width:1px;height:862px;background:#a7b0c2"></div>
<div class="abs" style="left:1896px;top:122px;width:8px;height:862px;background:#f4f4f4;border-radius:4px"></div>
<div class="abs" style="left:1896px;top:122px;width:8px;height:761px;background:#a7b0c2;border-radius:4px"></div>
<div class="lbl" style="left:1588px;top:136.5px">Author</div>
<div class="inp" style="left:1588px;top:164px;width:292px;background:#f4f4f4;color:#555">XMPro Solutions Team</div>
<div class="lbl" style="left:1588px;top:234.5px">Category</div>
<div class="inp" style="left:1588px;top:262px;width:292px;background:#fff;color:#000">Manufacturing</div>
<div class="lbl" style="left:1588px;top:332.5px">Tags</div>
<div class="abs" style="left:1588px;top:360px;width:292px;height:153px;background:#fff;border:1px solid #a7b0c2;border-radius:4px"></div>
<div class="row" style="left:1601px;top:373px"><span class="chip">energy_management<i><svg width="8" height="8" viewBox="0 0 8 8" stroke="#2d3748" stroke-width="1.7"><line x1="1" y1="1" x2="7" y2="7"/><line x1="7" y1="1" x2="1" y2="7"/></svg></i></span></div>
<div class="row" style="left:1601px;top:407px"><span class="chip">anomaly_detection<i><svg width="8" height="8" viewBox="0 0 8 8" stroke="#2d3748" stroke-width="1.7"><line x1="1" y1="1" x2="7" y2="7"/><line x1="7" y1="1" x2="1" y2="7"/></svg></i></span></div>
<div class="row" style="left:1601px;top:441px"><span class="chip">sustainability<i><svg width="8" height="8" viewBox="0 0 8 8" stroke="#2d3748" stroke-width="1.7"><line x1="1" y1="1" x2="7" y2="7"/><line x1="7" y1="1" x2="1" y2="7"/></svg></i></span><span class="chip">power_quality<i><svg width="8" height="8" viewBox="0 0 8 8" stroke="#2d3748" stroke-width="1.7"><line x1="1" y1="1" x2="7" y2="7"/><line x1="7" y1="1" x2="1" y2="7"/></svg></i></span></div>
<div class="row" style="left:1601px;top:475px"><span class="chip">oee<i><svg width="8" height="8" viewBox="0 0 8 8" stroke="#2d3748" stroke-width="1.7"><line x1="1" y1="1" x2="7" y2="7"/><line x1="7" y1="1" x2="1" y2="7"/></svg></i></span><span class="addp" style="margin-left:4px">Add</span></div>
<div class="abs" style="left:1588px;top:546px;width:292px;height:1px;background:#efefef"></div>
<div class="lbl" style="left:1588px;top:566px">Model Provider</div>
<div class="inp" style="left:1588px;top:593px;width:292px;height:45px;line-height:43px">&nbsp;OpenAI
  <svg class="abs" style="right:4px;top:18px" width="9" height="7" viewBox="0 0 9 7" fill="none" stroke="#111" stroke-width="1.7"><path d="M0.9 1.2 L4.5 4.8 L8.1 1.2"/></svg>
</div>
<div class="lbl" style="left:1588px;top:665.1px">Model Name</div>
<div class="inp" style="left:1588px;top:692.6px;width:292px;background:#fff;color:#000">gpt-4o</div>
<div class="lbl" style="left:1588px;top:762.5px">Max Tokens</div>
<div class="inp" style="left:1588px;top:790px;width:292px;background:#fff;color:#000">2000</div>
<div class="abs" style="left:1588px;top:866px;width:292px;height:1px;background:#efefef"></div>
<div class="lbl" style="left:1588px;top:885.5px">Created</div>
<div class="inp" style="left:1588px;top:913px;width:292px;background:#f4f4f4;color:#333">Jun 9, 2024 8:00:00 PM</div>

</body></html>
